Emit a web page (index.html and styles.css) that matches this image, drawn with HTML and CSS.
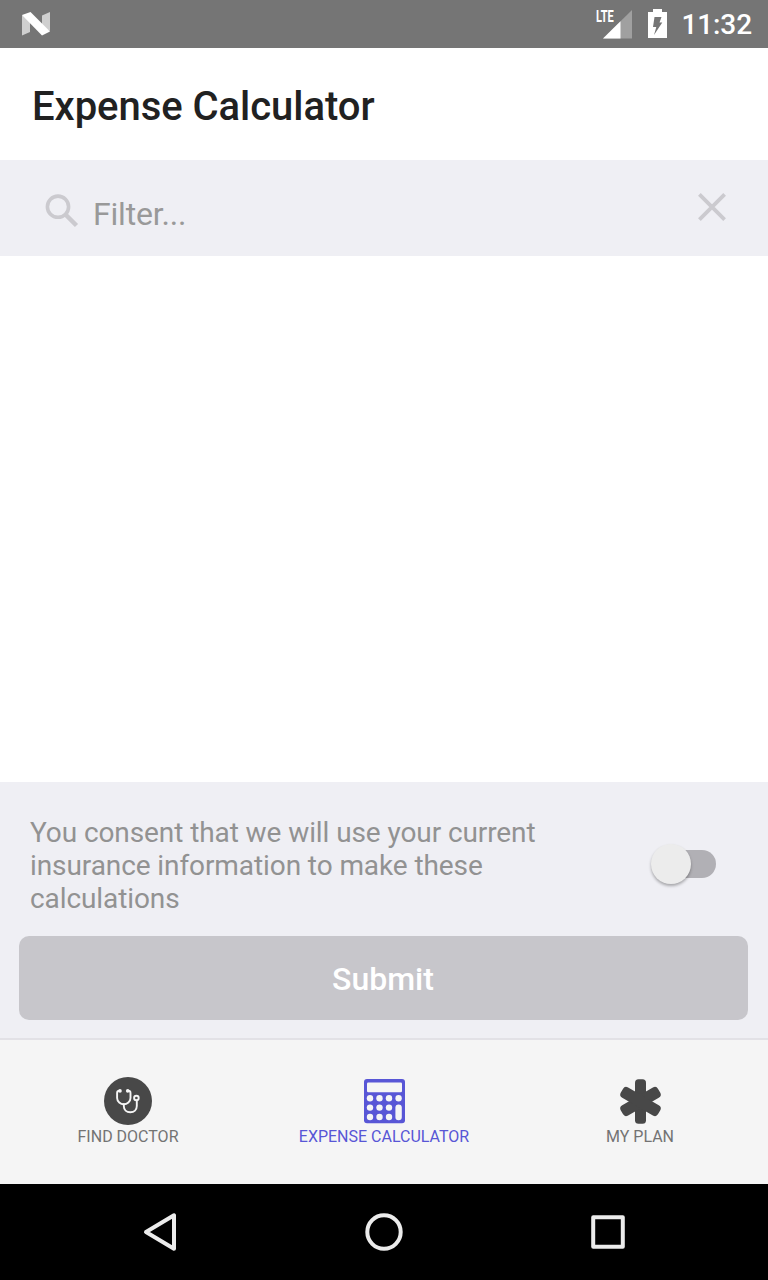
FILE: index.html
```html
<!DOCTYPE html>
<html lang="en">
<head>
<meta charset="utf-8">
<title>Expense Calculator</title>
<link rel="stylesheet" href="styles.css">
</head>
<body>
<div class="screen">
  <div class="status-bar">
    <svg class="status-logo" width="30" height="26" viewBox="0 0 30 26">
      <path fill="#cfcfcf" d="M1 4 9 8V21L1 24.600ZM29 1 21 4.500V17L29 20Z"/>
      <path fill="#fff" d="M1 4 9.500 1 29 20.500 21 24.600Z"/>
    </svg>
    <div class="status-items">
      <div class="signal">
        <span class="network">LTE</span>
        <svg width="30" height="29" viewBox="0 0 30 29">
          <path fill="#a0a0a0" d="M29 0V28.500H0Z"/>
          <path fill="#fff" d="M17.500 11.300V28.500H0Z"/>
        </svg>
      </div>
      <svg class="battery" width="19" height="29" viewBox="0 0 19 29">
        <path fill="#fff" d="M5 0H14V3H19V29H0V3H5Z"/>
        <path fill="#757575" d="M6.500 8H13.500L11.500 13.500H14.300L6 26 8.300 18H5Z"/>
      </svg>
      <span class="time">11:32</span>
    </div>
  </div>
  <header class="title-bar"><h1 class="title">Expense Calculator</h1></header>
  <div class="filter-bar">
    <svg class="search" width="34" height="34" viewBox="0 0 34 34" fill="none" stroke="#cbcacf">
      <circle cx="13" cy="12.700" r="10.600" stroke-width="3.600"/>
      <path stroke-width="4.500" d="M20.500 20.500 31.500 31.500"/>
    </svg>
    <span class="placeholder">Filter...</span>
    <svg class="clear" width="28" height="28" viewBox="0 0 28 28" stroke="#cbcacf" stroke-width="3.800">
      <path d="M1.400 1.400 26.600 26.600M26.600 1.400 1.400 26.600"/>
    </svg>
  </div>
  <main class="results"></main>
  <section class="consent">
    <div class="consent-row">
      <p class="consent-text">You consent that we will use your current insurance information to make these calculations</p>
      <div class="switch"><div class="thumb"></div></div>
    </div>
    <div class="submit">Submit</div>
  </section>
  <nav class="tabs">
    <div class="tab">
      <svg width="48" height="48" viewBox="0 0 48 48">
        <circle cx="24" cy="24" r="24" fill="#484848"/>
        <g fill="none" stroke="#f5f5f5" stroke-width="1.900" stroke-linecap="round">
          <path d="M15.500 13.800C13.700 13.800 13.100 14.300 13.100 16V21C13.100 24.500 16.500 27.200 19.800 27.200S26.500 24.500 26.500 21V16C26.500 14.300 25.900 13.800 24.100 13.800"/>
          <path d="M19.800 27.200V29C19.800 33 22.500 35.300 26.300 35.300S32.800 33 32.800 29V23.500"/>
          <circle cx="32.400" cy="21" r="2.300"/>
        </g>
        <circle cx="16" cy="13.900" r="1.800" fill="#f5f5f5"/>
        <circle cx="23.700" cy="13.900" r="1.800" fill="#f5f5f5"/>
      </svg>
      <span>FIND DOCTOR</span>
    </div>
    <div class="tab tab-active">
      <svg width="42" height="48" viewBox="0 0 42 48">
        <rect x="1" y="2" width="41" height="44.300" rx="3" fill="#5856d6"/>
        <g fill="#f5f5f5">
          <rect x="4" y="5.600" width="35" height="9.700" rx="1.200"/>
          <circle cx="7" cy="21.200" r="3.200"/><circle cx="16.500" cy="21.200" r="3.200"/><circle cx="26" cy="21.200" r="3.200"/><circle cx="35.600" cy="21.200" r="3.200"/>
          <circle cx="7" cy="30.600" r="3.200"/><circle cx="16.500" cy="30.600" r="3.200"/><circle cx="26" cy="30.600" r="3.200"/>
          <circle cx="7" cy="40" r="3.200"/><circle cx="16.500" cy="40" r="3.200"/><circle cx="26" cy="40" r="3.200"/>
          <rect x="32.400" y="27.400" width="6.400" height="15.800" rx="3.200"/>
        </g>
      </svg>
      <span>EXPENSE CALCULATOR</span>
    </div>
    <div class="tab">
      <svg width="48" height="48" viewBox="0 0 48 48">
        <g fill="#484848" transform="translate(24.500 24.500)">
          <rect x="-5.500" y="-22.200" width="11" height="44.400" rx="3.500"/>
          <rect x="-5.900" y="-21.500" width="11.800" height="43" rx="3.800" transform="rotate(60)"/>
          <rect x="-5.900" y="-21.500" width="11.800" height="43" rx="3.800" transform="rotate(-60)"/>
        </g>
      </svg>
      <span>MY PLAN</span>
    </div>
  </nav>
  <div class="system-nav">
    <svg width="40" height="40" viewBox="0 0 40 40"><path d="M6 20 34 3.300V36.700Z"/></svg>
    <svg width="40" height="40" viewBox="0 0 40 40"><circle cx="20" cy="20" r="16.700"/></svg>
    <svg width="40" height="40" viewBox="0 0 40 40"><rect x="5.200" y="5.200" width="29.600" height="29.600"/></svg>
  </div>
</div>
</body>
</html>
```
FILE: styles.css
```css
* { box-sizing: border-box; }
body { margin: 0; font-family: Roboto, sans-serif; background: #fff; }
svg { display: block; flex: none; }
.screen { display: flex; flex-direction: column; width: 768px; height: 1280px; }
.status-bar { display: flex; justify-content: space-between; height: 48px; padding: 0 16px 0 21px; background: #757575; color: #fff; }
.status-logo { margin-top: 11px; }
.status-items { display: flex; align-items: flex-start; }
.signal { position: relative; margin: 10px 15px 0 0; }
.network { position: absolute; left: -7px; top: -3px; font-size: 16px; line-height: 20px; font-weight: 700; transform: scaleX(.69); transform-origin: left; }
.battery { margin: 9px 14px 0 0; }
.time { width: 71px; font-size: 28px; font-weight: 500; line-height: 50px; letter-spacing: -.1px; text-align: right; }
.title-bar { display: flex; align-items: center; height: 112px; padding: 6px 32px 0; }
.title { margin: 0; font-size: 40px; line-height: 48px; font-weight: 500; letter-spacing: -.04px; color: #212121; }
.filter-bar { display: flex; align-items: flex-start; height: 96px; padding: 33px 42px 0 45px; background: #efeff4; }
.search { margin-top: 1px; }
.placeholder { flex: 1; margin: 2px 0 0 14px; font-size: 32px; line-height: 38px; letter-spacing: -.2px; color: #999; }
.results { flex: 1; background: #fff; }
.consent { height: 256px; padding: 34px 20px 18px 19px; background: #efeff4; }
.consent-row { display: flex; justify-content: space-between; padding: 0 32px 0 11px; height: 120px; }
.consent-text { width: 540px; margin: 0; font-size: 28px; line-height: 33px; letter-spacing: -.09px; color: #929292; }
.switch { width: 64px; height: 28px; margin-top: 34px; border-radius: 14px; background: #b1b0b5; }
.thumb { width: 40px; height: 40px; margin: -6px 0 0 -1px; border-radius: 50%; background: #ececec; box-shadow: 0 2px 3px rgba(0, 0, 0, .3); }
.submit { height: 84px; padding-right: 1px; border-radius: 10px; background: #c7c6cb; color: #fff; font-size: 32px; line-height: 86px; font-weight: 500; text-align: center; }
.tabs { display: flex; height: 146px; border-top: 2px solid #e2e1e6; background: #f5f5f5; color: #737373; }
.tab { flex: 1; display: flex; flex-direction: column; align-items: center; padding-top: 37px; font-size: 16px; line-height: 24px; }
.tab-active { color: #5856d6; }
.system-nav { display: flex; align-items: center; justify-content: space-between; height: 96px; padding: 0 140px; background: #000; }
.system-nav svg { fill: none; stroke: #ececec; stroke-width: 4; stroke-linejoin: round; }
```
